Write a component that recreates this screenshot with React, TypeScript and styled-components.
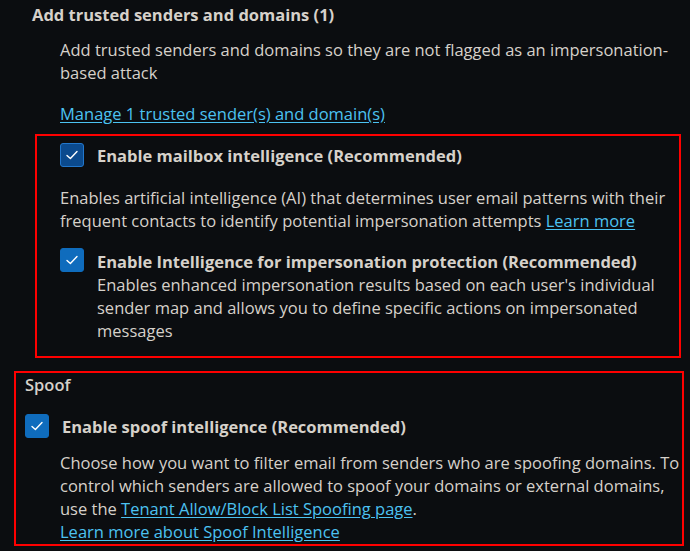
import React from "react";
import styled, { createGlobalStyle } from "styled-components";

const Global = createGlobalStyle`
  html, body { margin: 0; padding: 0; background: #0b0d10; }
  body { font-family: "Open Sans", "Noto Sans", sans-serif; color: #d6d1ca; font-size: 16.5px; line-height: 23px; }
`;

const Page = styled.div`
  width: 690px;
  height: 551px;
  overflow: hidden;
  background: #0b0d10;
  display: flex;
  flex-direction: column;
  padding-top: 3px;
  box-sizing: border-box;
`;

const Section = styled.div`
  padding-left: 32px;
  display: flex;
  flex-direction: column;
`;

const Heading = styled.div`
  font-weight: 700;
`;

const Para = styled.div<{ $indent?: number; $mt?: number }>`
  margin-left: ${(p) => p.$indent ?? 0}px;
  margin-top: ${(p) => p.$mt ?? 0}px;
  white-space: nowrap;
`;

const Link = styled.a`
  color: #4cc2f1;
  text-decoration: underline;
  text-underline-offset: 2px;
  cursor: pointer;
`;

const Outlined = styled.div<{ $ml: number; $w: number; $mt: number; $h: number; $pl: number }>`
  margin-left: ${(p) => p.$ml}px;
  margin-top: ${(p) => p.$mt}px;
  width: ${(p) => p.$w}px;
  height: ${(p) => p.$h}px;
  box-sizing: border-box;
  border: 2px solid #ff0000;
  padding-left: ${(p) => p.$pl}px;
  display: flex;
  flex-direction: column;
  overflow: hidden;
`;

const Row = styled.div<{ $mt: number }>`
  display: flex;
  align-items: flex-start;
  gap: 13px;
  margin-top: ${(p) => p.$mt}px;
`;

const Box = styled.span<{ $focus?: boolean }>`
  flex: none;
  width: 24px;
  height: 24px;
  box-sizing: border-box;
  border-radius: 3px;
  background: ${(p) => (p.$focus ? "#0b4a8e" : "#0f6cbd")};
  border: 1px solid ${(p) => (p.$focus ? "#2277cc" : "#0f6cbd")};
  display: flex;
  align-items: center;
  justify-content: center;
`;

const Label = styled.div<{ $pt?: number }>`
  font-weight: 700;
  white-space: nowrap;
  padding-top: ${(p) => p.$pt ?? 0}px;
`;

const Col = styled.div`
  display: flex;
  flex-direction: column;
  padding-top: 2px;
`;

const SectionTitle = styled.div`
  font-weight: 600;
`;

const Check = ({ focus }: { focus?: boolean }) => (
  <Box $focus={focus}>
    <svg width="14" height="14" viewBox="0 0 14 14" fill="none">
      <path d="M2 7.4 L5.4 10.6 L12 3.6" stroke="#ffffff" strokeWidth="1.4" strokeLinecap="round" strokeLinejoin="round" />
    </svg>
  </Box>
);

export default function App() {
  return (
    <>
      <Global />
      <Page>
        <Section>
          <Heading>Add trusted senders and domains (1)</Heading>
          <Para $indent={28} $mt={12}>
            Add trusted senders and domains so they are not flagged as an impersonation-
            <br />
            based attack
          </Para>
          <Para $indent={28} $mt={18}>
            <Link>Manage 1 trusted sender(s) and domain(s)</Link>
          </Para>
        </Section>
        <Outlined $ml={35} $w={646} $mt={9} $h={224} $pl={23}>
          <Row $mt={7}>
            <Check focus />
            <Label $pt={1}>Enable mailbox intelligence (Recommended)</Label>
          </Row>
          <Para $mt={19}>
            Enables artificial intelligence (AI) that determines user email patterns with their
            <br />
            frequent contacts to identify potential impersonation attempts <Link>Learn more</Link>
          </Para>
          <Row $mt={16}>
            <Check />
            <Col>
              <Label>Enable Intelligence for impersonation protection (Recommended)</Label>
              <Para>
                Enables enhanced impersonation results based on each user's individual
                <br />
                sender map and allows you to define specific actions on impersonated
                <br />
                messages
              </Para>
            </Col>
          </Row>
        </Outlined>
        <Outlined $ml={14} $w={670} $mt={13} $h={175} $pl={9}>
          <SectionTitle>Spoof</SectionTitle>
          <Row $mt={18}>
            <Check />
            <Label $pt={1}>Enable spoof intelligence (Recommended)</Label>
          </Row>
          <Para $mt={13} $indent={35}>
            Choose how you want to filter email from senders who are spoofing domains. To
            <br />
            control which senders are allowed to spoof your domains or external domains,
            <br />
            use the <Link>Tenant Allow/Block List Spoofing page</Link>.
            <br />
            <Link>Learn more about Spoof Intelligence</Link>
          </Para>
        </Outlined>
      </Page>
    </>
  );
}
